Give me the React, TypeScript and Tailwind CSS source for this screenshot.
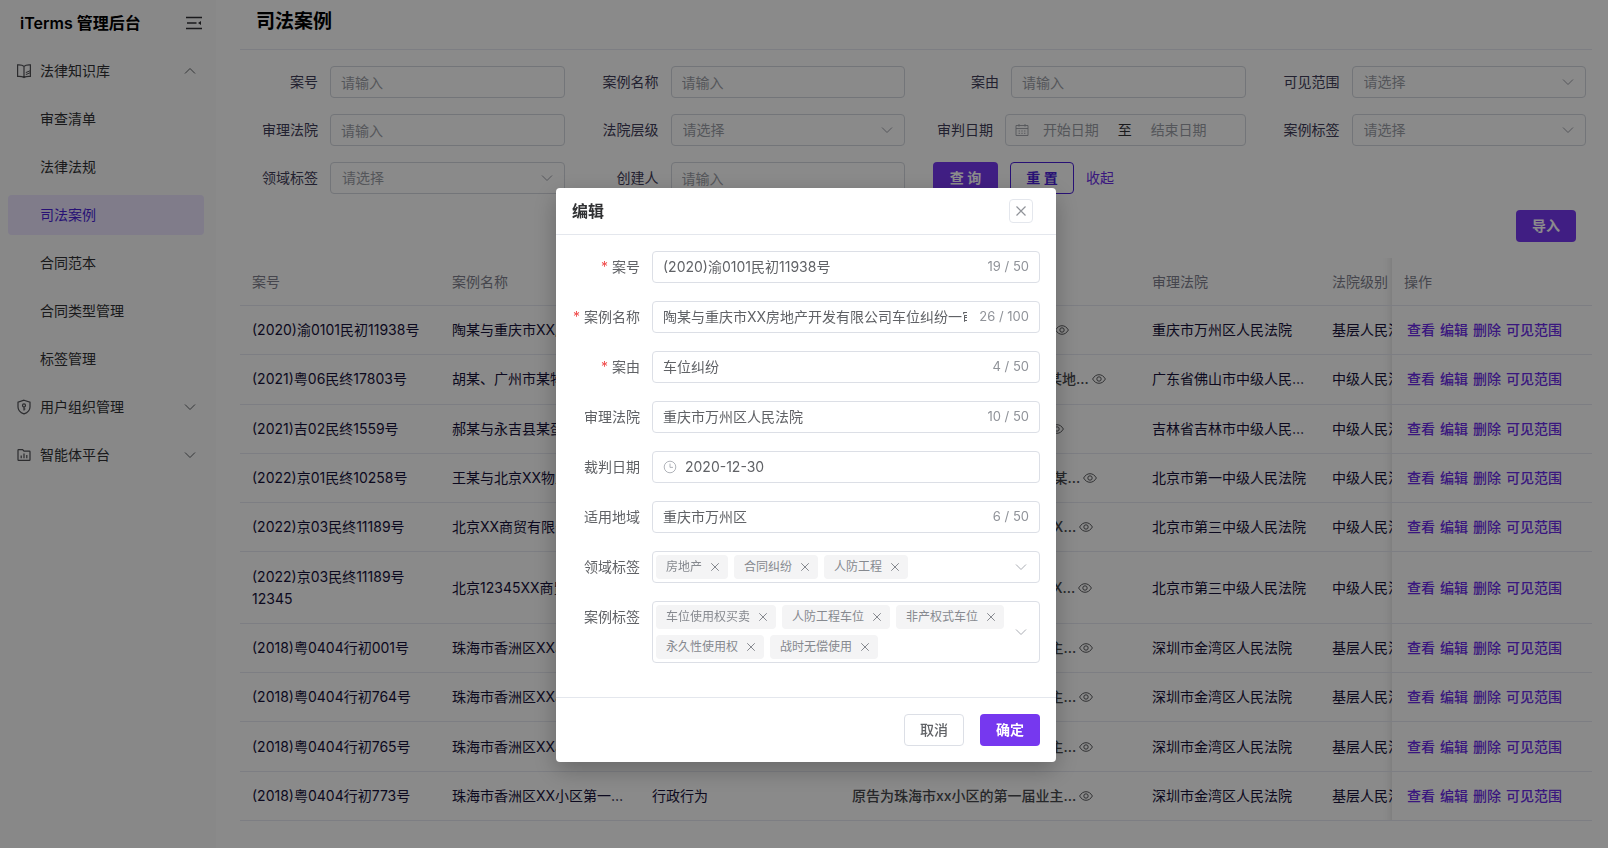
import {useId, useState} from "react";
import type {ReactNode} from "react";
import clsx from "clsx";

type MenuItem = {label: string; active?: boolean};

type CaseRow = {
  no: string;
  name: string;
  cause: string;
  summary: string;
  court: string;
  level: string;
};

const knowledgeMenu: MenuItem[] = [
  {label: "审查清单"},
  {label: "法律法规"},
  {label: "司法案例", active: true},
  {label: "合同范本"},
  {label: "合同类型管理"},
  {label: "标签管理"},
];

const rows: CaseRow[] = [
  {no: "(2020)渝0101民初11938号", name: "陶某与重庆市XX房地产开发有限公司车位纠纷一审", cause: "车位纠纷", summary: "原告陶某与重庆市XX房地产开...", court: "重庆市万州区人民法院", level: "基层人民法院"},
  {no: "(2021)粤06民终17803号", name: "胡某、广州市某物业服务有限公司车位纠纷", cause: "车位纠纷", summary: "原告胡某诉被告广州市某物业的某地...", court: "广东省佛山市中级人民法院", level: "中级人民法院"},
  {no: "(2021)吉02民终1559号", name: "郝某与永吉县某蛋鸡养殖场合同纠纷", cause: "合同纠纷", summary: "原告郝某与被告永吉县某蛋鸡...", court: "吉林省吉林市中级人民法院", level: "中级人民法院"},
  {no: "(2022)京01民终10258号", name: "王某与北京XX物业管理有限公司合同纠纷", cause: "合同纠纷", summary: "原告王某与被告北京XX物业公司某...", court: "北京市第一中级人民法院", level: "中级人民法院"},
  {no: "(2022)京03民终11189号", name: "北京XX商贸有限公司与北京XX公司合同纠纷", cause: "合同纠纷", summary: "原告北京XX商贸有限公司与被告X...", court: "北京市第三中级人民法院", level: "中级人民法院"},
  {no: "(2022)京03民终11189号12345", name: "北京12345XX商贸有限公司与北京XX公司合同纠纷", cause: "合同纠纷", summary: "北京12345XX商贸有限公司与被X...", court: "北京市第三中级人民法院", level: "中级人民法院"},
  {no: "(2018)粤0404行初001号", name: "珠海市香洲区XX小区第一届业主委员会", cause: "行政行为", summary: "原告为珠海市xx小区的第一届业主...", court: "深圳市金湾区人民法院", level: "基层人民法院"},
  {no: "(2018)粤0404行初764号", name: "珠海市香洲区XX小区第一届业主委员会", cause: "行政行为", summary: "原告为珠海市xx小区的第一届业主...", court: "深圳市金湾区人民法院", level: "基层人民法院"},
  {no: "(2018)粤0404行初765号", name: "珠海市香洲区XX小区第一届业主委员会", cause: "行政行为", summary: "原告为珠海市xx小区的第一届业主...", court: "深圳市金湾区人民法院", level: "基层人民法院"},
  {no: "(2018)粤0404行初773号", name: "珠海市香洲区XX小区第一届业主委员会", cause: "行政行为", summary: "原告为珠海市xx小区的第一届业主...", court: "深圳市金湾区人民法院", level: "基层人民法院"},
];

const rowActions = ["查看", "编辑", "删除", "可见范围"];

const fieldClass =
  "h-8 w-full min-w-0 rounded-sm border border-[#d2d5dc] bg-transparent px-[10px] text-sm text-[#606266] outline-none placeholder:text-[#9a9da5]";

/* ---------- icons ---------- */

function Chevron({up, className}: {up?: boolean; className?: string}) {
  return (
    <svg viewBox="0 0 12 12" width="12" height="12" fill="none" stroke="currentColor" aria-hidden="true" className={className}>
      <path d={up ? "M1 8.5 6 3.5 11 8.5" : "M1 3.5 6 8.5 11 3.5"} />
    </svg>
  );
}

function Cross({size}: {size: number}) {
  return (
    <svg viewBox="0 0 12 12" width={size} height={size} fill="none" stroke="currentColor" strokeWidth="1.2" aria-hidden="true">
      <path d="M1.5 1.5 10.5 10.5M10.5 1.5 1.5 10.5" />
    </svg>
  );
}

function CollapseIcon() {
  return (
    <svg viewBox="0 0 16 14" width="16" height="14" fill="none" stroke="currentColor" strokeWidth="1.3" aria-hidden="true">
      <path d="M0 1.5H16M1 7H10.5M0 12.5H16" />
      <path d="M15 5V9L12 7Z" fill="currentColor" stroke="none" />
    </svg>
  );
}

function BookIcon() {
  return (
    <svg viewBox="0 0 16 16" width="16" height="16" fill="none" stroke="currentColor" strokeWidth="1.2" aria-hidden="true">
      <path d="M8 3.4C6.4 1.9 4.2 1.7 1.6 1.9V13.4C4.2 13.2 6.4 13.4 8 14.6C9.6 13.4 11.8 13.2 14.4 13.4V1.9C11.8 1.7 9.6 1.9 8 3.4ZM8 3.4V14.4" />
      <path d="M9.8 11.6 14 9.8M9.8 9.6 14 7.8" strokeWidth="1" />
    </svg>
  );
}

function ShieldIcon() {
  return (
    <svg viewBox="0 0 16 16" width="16" height="16" fill="none" stroke="currentColor" strokeWidth="1.2" aria-hidden="true">
      <path d="M8 1.2 14 3.2V8C14 11.4 11.6 13.6 8 14.9C4.4 13.6 2 11.4 2 8V3.2Z" />
      <circle cx="8" cy="6.4" r="1.5" />
      <path d="M8 8V11.4M8 10H9.4" />
    </svg>
  );
}

function FolderChartIcon() {
  return (
    <svg viewBox="0 0 16 16" width="16" height="16" fill="none" stroke="currentColor" strokeWidth="1.2" aria-hidden="true">
      <path d="M2.6 2.6H6.6L8 4.2H13.4Q14 4.2 14 4.8V12.8Q14 13.4 13.4 13.4H2.6Q2 13.4 2 12.8V3.2Q2 2.6 2.6 2.6Z" />
      <path d="M5.2 8.4V11.2M8 6.4V11.2M10.8 8V11.2" />
    </svg>
  );
}

function EyeIcon() {
  return (
    <svg viewBox="0 0 14 14" width="14" height="14" fill="none" stroke="currentColor" strokeWidth="0.9" aria-hidden="true">
      <path d="M0.6 7C2.2 4.2 4.4 2.7 7 2.7S11.8 4.2 13.4 7C11.8 9.8 9.6 11.3 7 11.3S2.2 9.8 0.6 7Z" />
      <circle cx="7" cy="7" r="2.2" />
    </svg>
  );
}

function CalendarIcon() {
  return (
    <svg viewBox="0 0 14 14" width="14" height="14" fill="none" stroke="currentColor" strokeWidth="0.9" aria-hidden="true">
      <path d="M1 2.5H13V12.5H1ZM1 5.5H13M4 1V3.6M10 1V3.6" />
      <path d="M3.6 8H5M6.3 8H7.7M9 8H10.4M3.6 10.3H5M6.3 10.3H7.7M9 10.3H10.4" />
    </svg>
  );
}

function ClockIcon() {
  return (
    <svg viewBox="0 0 14 14" width="14" height="14" fill="none" stroke="currentColor" strokeWidth="0.9" aria-hidden="true">
      <circle cx="7" cy="7" r="5.8" />
      <path d="M7 3.6V7.4H10" />
    </svg>
  );
}

/* ---------- sidebar ---------- */

function MenuGroup({icon, label, open}: {icon: ReactNode; label: string; open?: boolean}) {
  return (
    <button type="button" aria-expanded={!!open} className="flex h-10 w-full items-center gap-2 px-2 text-left text-sm text-[#303133]">
      <span className="text-[#505155]">{icon}</span>
      <span className="flex-1">{label}</span>
      <Chevron up={open} className="text-[#606266]" />
    </button>
  );
}

function Sidebar() {
  return (
    <aside className="w-[216px] shrink-0 bg-[#f7f7f8]">
      <div className="flex h-[46px] items-center justify-between pr-[14px] pl-5">
        <h1 className="text-base font-semibold text-black">iTerms 管理后台</h1>
        <button type="button" aria-label="收起菜单" className="text-[#303133]">
          <CollapseIcon />
        </button>
      </div>
      <nav className="flex flex-col gap-2 pt-[5px] pr-3 pl-2">
        <MenuGroup icon={<BookIcon />} label="法律知识库" open />
        {knowledgeMenu.map((item) => (
          <a
            key={item.label}
            href="#"
            className={clsx(
              "flex h-10 items-center rounded-sm pl-8 text-sm",
              item.active ? "bg-[#e9e2fc] text-[#4a1fd6]" : "text-[#303133]",
            )}
          >
            {item.label}
          </a>
        ))}
        <MenuGroup icon={<ShieldIcon />} label="用户组织管理" />
        <MenuGroup icon={<FolderChartIcon />} label="智能体平台" />
      </nav>
    </aside>
  );
}

/* ---------- filters ---------- */

function FilterInput({label}: {label: string}) {
  const id = useId();
  return (
    <div className="flex items-center gap-3">
      <label htmlFor={id} className="w-[78px] shrink-0 text-right text-sm text-[#3f3c58]">
        {label}
      </label>
      <input id={id} type="text" placeholder="请输入" className={fieldClass} />
    </div>
  );
}

function FilterSelect({label}: {label: string}) {
  const id = useId();
  return (
    <div className="flex items-center gap-3">
      <label htmlFor={id} className="w-[78px] shrink-0 text-right text-sm text-[#3f3c58]">
        {label}
      </label>
      <div className="relative min-w-0 flex-1">
        <select
          id={id}
          defaultValue=""
          className="h-8 w-full appearance-none rounded-sm border border-[#d2d5dc] bg-transparent px-[11px] text-sm text-[#9a9da5] outline-none"
        >
          <option value="">请选择</option>
        </select>
        <Chevron className="pointer-events-none absolute top-[10px] right-3 text-[#9a9da5]" />
      </div>
    </div>
  );
}

function FilterDateRange() {
  const id = useId();
  return (
    <div className="flex items-center gap-3">
      <label htmlFor={id} className="w-[72px] shrink-0 text-right text-sm text-[#3f3c58]">
        审判日期
      </label>
      <div className="flex h-8 min-w-0 flex-1 items-center rounded-sm border border-[#d2d5dc] pr-6 pl-[9px] text-sm">
        <span className="text-[#9a9da5]">
          <CalendarIcon />
        </span>
        <input id={id} type="text" placeholder="开始日期" className="w-0 flex-1 bg-transparent text-center outline-none placeholder:text-[#9a9da5]" />
        <span className="px-[5px] text-[#303133]">至</span>
        <input type="text" aria-label="结束日期" placeholder="结束日期" className="w-0 flex-1 bg-transparent text-center outline-none placeholder:text-[#9a9da5]" />
      </div>
    </div>
  );
}

function Filters() {
  return (
    <form className="grid grid-cols-4 gap-4 pt-4 pr-[6px]" onSubmit={(e) => e.preventDefault()}>
      <FilterInput label="案号" />
      <FilterInput label="案例名称" />
      <FilterInput label="案由" />
      <FilterSelect label="可见范围" />
      <FilterInput label="审理法院" />
      <FilterSelect label="法院层级" />
      <FilterDateRange />
      <FilterSelect label="案例标签" />
      <FilterSelect label="领域标签" />
      <FilterInput label="创建人" />
      <div className="flex items-center gap-3 pl-3 text-sm">
        <button type="submit" className="h-8 w-[65px] rounded-sm bg-[#7638ef] font-bold text-white">
          查 询
        </button>
        <button type="reset" className="h-8 w-16 rounded-sm border border-[#4a1fd6] font-bold text-[#4a1fd6]">
          重 置
        </button>
        <button type="button" className="text-[#6a2be6]">
          收起
        </button>
      </div>
    </form>
  );
}

/* ---------- table ---------- */

const headClass = "border-b border-[#e4e6ee] px-3 text-left text-sm font-normal text-[#7e7f8c]";
const cellClass = "border-b border-[#e4e6ee] px-3 py-[13px] text-sm leading-[22px] text-[#17123a]";
const stickyClass =
  "sticky right-0 bg-[#fbfbfb] before:pointer-events-none before:absolute before:inset-y-0 before:-left-[10px] before:w-[10px] before:shadow-[inset_-10px_0_10px_-10px_rgba(0,0,0,0.15)]";

function CaseTable() {
  return (
    <div className="mt-4 overflow-x-auto [scrollbar-width:none]">
      <table className="h-[563px] w-full min-w-[1600px] table-fixed border-separate border-spacing-0">
        <colgroup>
          <col className="w-[200px]" />
          <col className="w-[200px]" />
          <col className="w-[200px]" />
          <col className="w-[300px]" />
          <col className="w-[180px]" />
          <col />
          <col className="w-[200px]" />
        </colgroup>
        <thead>
          <tr className="h-12">
            <th className={headClass}>案号</th>
            <th className={headClass}>案例名称</th>
            <th className={headClass}>案由</th>
            <th className={headClass}>基本案情</th>
            <th className={headClass}>审理法院</th>
            <th className={headClass}>法院级别</th>
            <th className={clsx(headClass, stickyClass)}>操作</th>
          </tr>
        </thead>
        <tbody>
          {rows.map((row) => (
            <tr key={row.no}>
              <td className={clsx(cellClass, "break-words")}>{row.no}</td>
              <td className={clsx(cellClass, "truncate")}>{row.name}</td>
              <td className={clsx(cellClass, "truncate")}>{row.cause}</td>
              <td className={cellClass}>
                <div className="flex items-center gap-[3px] font-medium whitespace-nowrap text-[#48494d]">
                  <span>{row.summary}</span>
                  <button type="button" aria-label="查看详情">
                    <EyeIcon />
                  </button>
                </div>
              </td>
              <td className={clsx(cellClass, "truncate")}>{row.court}</td>
              <td className={clsx(cellClass, "truncate")}>{row.level}</td>
              <td className={clsx(cellClass, stickyClass)}>
                <div className="flex gap-[5px] pl-[3px] font-medium whitespace-nowrap text-[#6a2be6]">
                  {rowActions.map((action) => (
                    <button key={action} type="button">
                      {action}
                    </button>
                  ))}
                </div>
              </td>
            </tr>
          ))}
        </tbody>
      </table>
    </div>
  );
}

/* ---------- edit dialog ---------- */

function DialogRow({label, htmlFor, required, children}: {label: string; htmlFor: string; required?: boolean; children: ReactNode}) {
  return (
    <div className="flex items-start">
      <label htmlFor={htmlFor} className="w-20 shrink-0 pr-3 text-right text-sm leading-8 whitespace-nowrap text-[#606266]">
        {required && <span className="mr-1 text-[#f04a4a]">*</span>}
        {label}
      </label>
      <div className="min-w-0 flex-1">{children}</div>
    </div>
  );
}

function CountedInput({label, initial, count, max, required}: {label: string; initial: string; count: number; max: number; required?: boolean}) {
  const id = useId();
  const [value, setValue] = useState(initial);
  const used = value === initial ? count : value.length;

  return (
    <DialogRow label={label} htmlFor={id} required={required}>
      <div className="flex h-8 items-center gap-3 rounded-sm border border-[#dcdfe6] px-[10px]">
        <input
          id={id}
          type="text"
          value={value}
          onChange={(e) => setValue(e.target.value)}
          className="min-w-0 flex-1 text-sm text-[#606266] outline-none"
        />
        <span className="shrink-0 text-[13px] text-[#909399]">
          {used} / {max}
        </span>
      </div>
    </DialogRow>
  );
}

function DateInput({label, initial}: {label: string; initial: string}) {
  const id = useId();
  return (
    <DialogRow label={label} htmlFor={id}>
      <div className="flex h-8 items-center gap-2 rounded-sm border border-[#dcdfe6] px-[10px] text-[#a8abb2]">
        <ClockIcon />
        <input id={id} type="text" defaultValue={initial} className="min-w-0 flex-1 text-sm text-[#606266] outline-none" />
      </div>
    </DialogRow>
  );
}

function TagSelect({label, initial}: {label: string; initial: string[]}) {
  const id = useId();
  const [tags, setTags] = useState(initial);

  return (
    <DialogRow label={label} htmlFor={id}>
      <div className="flex items-center rounded-sm border border-[#dcdfe6] py-[3px] pr-3 pl-[3px]">
        <ul className="flex flex-1 flex-wrap gap-[6px]">
          {tags.map((tag) => (
            <li key={tag} className="flex h-6 items-center rounded-sm bg-[#f4f4f5] pr-[6px] pl-[10px] text-xs text-[#86898f]">
              {tag}
              <button
                type="button"
                aria-label={`移除${tag}`}
                onClick={() => setTags(tags.filter((t) => t !== tag))}
                className="ml-[6px] flex size-[14px] items-center justify-center"
              >
                <Cross size={10} />
              </button>
            </li>
          ))}
        </ul>
        <button id={id} type="button" aria-haspopup="listbox" className="text-[#a8abb2]">
          <Chevron />
        </button>
      </div>
    </DialogRow>
  );
}

function EditDialog({onClose}: {onClose: () => void}) {
  return (
    <div className="fixed inset-0 flex items-start justify-center bg-black/45 pt-[188px] pl-1">
      <div role="dialog" aria-modal="true" aria-labelledby="edit-title" className="w-[500px] rounded-sm bg-white shadow-[0_8px_24px_rgba(0,0,0,0.25)]">
        <header className="flex h-[47px] items-center justify-between border-b border-[#e4e7ed] pr-[23px] pl-4">
          <h2 id="edit-title" className="text-base font-bold text-[#303133]">
            编辑
          </h2>
          <button type="button" aria-label="关闭" onClick={onClose} className="flex size-6 items-center justify-center rounded-sm border border-[#e4e7ed] text-[#909399]">
            <Cross size={12} />
          </button>
        </header>
        <div className="flex flex-col gap-[18px] px-4 pt-4 pb-[34px]">
          <CountedInput label="案号" initial="(2020)渝0101民初11938号" count={19} max={50} required />
          <CountedInput label="案例名称" initial="陶某与重庆市XX房地产开发有限公司车位纠纷一审" count={26} max={100} required />
          <CountedInput label="案由" initial="车位纠纷" count={4} max={50} required />
          <CountedInput label="审理法院" initial="重庆市万州区人民法院" count={10} max={50} />
          <DateInput label="裁判日期" initial="2020-12-30" />
          <CountedInput label="适用地域" initial="重庆市万州区" count={6} max={50} />
          <TagSelect label="领域标签" initial={["房地产", "合同纠纷", "人防工程"]} />
          <TagSelect label="案例标签" initial={["车位使用权买卖", "人防工程车位", "非产权式车位", "永久性使用权", "战时无偿使用"]} />
        </div>
        <footer className="flex justify-end gap-4 border-t border-[#e4e7ed] p-4 text-sm">
          <button type="button" onClick={onClose} className="h-8 w-[60px] rounded-sm border border-[#dcdfe6] font-medium text-[#606266]">
            取消
          </button>
          <button type="button" onClick={onClose} className="h-8 w-[60px] rounded-sm bg-[#7638ef] font-bold text-white">
            确定
          </button>
        </footer>
      </div>
    </div>
  );
}

export default function App() {
  const [editing, setEditing] = useState(true);

  return (
    <div className="flex min-h-screen bg-[#fbfbfb] font-[Inter,'Noto_Sans_CJK_SC',sans-serif]">
      <Sidebar />
      <main className="min-w-0 flex-1 pr-4 pl-6">
        <h2 className="h-[50px] border-b border-[#e4e6ee] pl-4 text-[19px] leading-[44px] font-bold text-black">司法案例</h2>
        <Filters />
        <div className="mt-4 flex justify-end pr-4">
          <button type="button" className="h-8 rounded-sm bg-[#7638ef] px-4 text-sm font-bold text-white">
            导入
          </button>
        </div>
        <CaseTable />
      </main>
      {editing && <EditDialog onClose={() => setEditing(false)} />}
    </div>
  );
}
